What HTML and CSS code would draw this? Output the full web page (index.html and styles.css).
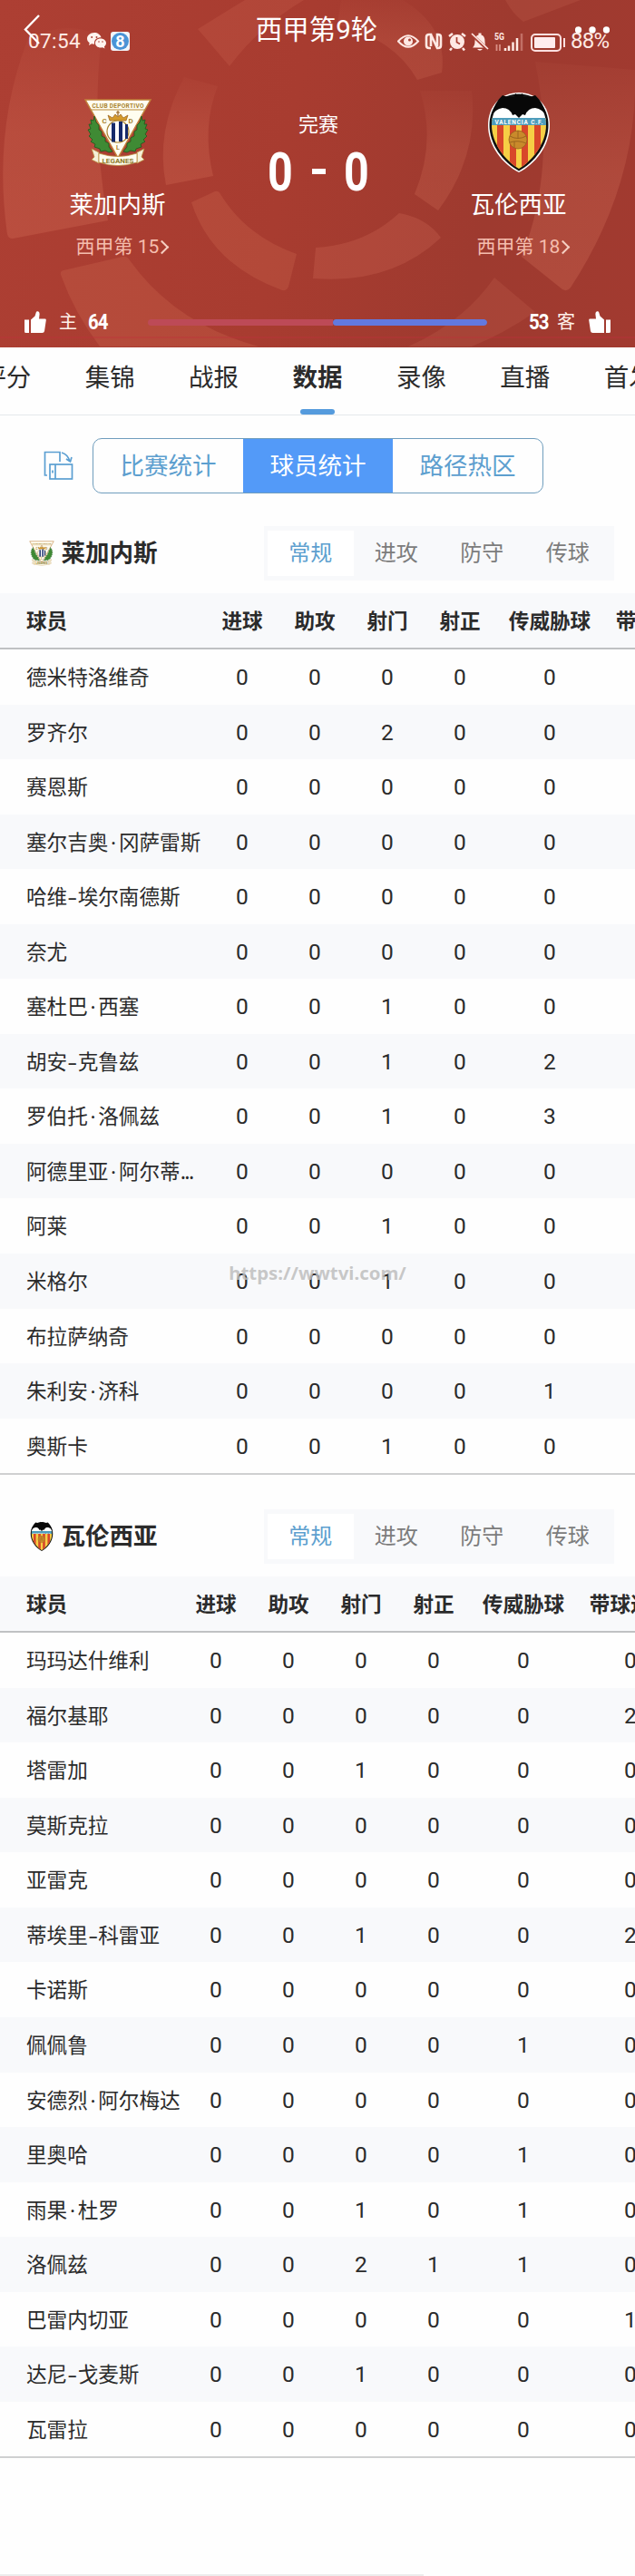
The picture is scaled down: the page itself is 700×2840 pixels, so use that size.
FILE: index.html
```html
<!DOCTYPE html>
<html lang="zh-CN">
<head>
    <meta charset="UTF-8">
    <meta name="viewport" content="width=device-width, initial-scale=1.0">
    <title>西甲第9轮 莱加内斯 - 瓦伦西亚</title>
    <link rel="stylesheet" href="styles.css">
</head>
<body>
    <!-- shared icons -->
    <svg class="sprite" width="0" height="0">
        <symbol id="leganes" viewBox="0 0 76 76">
            <path d="M2 2h72L38 66z" fill="#fffdf0" stroke="#c0803a" stroke-width="1.5"/>
            <path d="M8 13h60" stroke="#b98b3c" stroke-width="1"/>
            <text x="38" y="10.5" font-size="6.6" font-weight="bold" text-anchor="middle" textLength="57" fill="#a8842f">CLUB DEPORTIVO</text>
            <text x="23" y="28" font-size="8" font-weight="bold" text-anchor="middle" fill="#a8842f">C</text>
            <text x="52" y="28" font-size="8" font-weight="bold" text-anchor="middle" fill="#a8842f">D</text>
            <path d="M29 25l-2-6 5 3 3-4 3 3 3-3 3 4 5-3-2 6z" fill="#d49a2c" stroke="#96601d" stroke-width=".7"/>
            <path d="M38 14v6M36 16h4" stroke="#96601d" stroke-width="1.2"/>
            <circle cx="38" cy="37" r="12" fill="#fff" stroke="#a8842f" stroke-width="1.2"/>
            <path d="M31 27.500h4v21h-4zM39 26h4v22h-4zM46 29h3v16h-3z" fill="#152a6b"/>
            <text x="38" y="57" font-size="7" font-weight="bold" text-anchor="middle" fill="#a8842f">L</text>
            <g fill="#3f8a34" stroke="#1d5a1c" stroke-width=".8">
                <path id="wreath" d="M12 20l-1 5-3-1 1 5-3 0 2 5-3 1 3 5-2 2 4 4-2 2 5 3-1 3 6 2 1 3 5-1 4 2 4-1-4-5 0-4-4-2 0-4-4-2 0-5-3-2 0-5-3-3z"/>
                <use href="#wreath" transform="translate(76 0) scale(-1 1)"/>
            </g>
            <path d="M9 56l8 4v12l-8-4 3-3zM67 56l-8 4v12l8-4-3-3z" fill="#f5efd8" stroke="#b98b3c" stroke-width=".8"/>
            <path d="M17 61q21 7 42 0v10q-21 7-42 0z" fill="#fffdf0" stroke="#b98b3c" stroke-width=".8"/>
            <text x="38" y="71.500" font-size="8" font-weight="bold" text-anchor="middle" textLength="35" fill="#8d7a2b">LEGANES</text>
        </symbol>
        <symbol id="valencia" viewBox="0 0 70 90">
            <clipPath id="shield"><path d="M35 4C52 4 65 18 65 37 65 57 50 76 35 85 20 76 5 57 5 37 5 18 18 4 35 4z"/></clipPath>
            <path d="M35 1C55 1 69 16 69 37 69 60 53 80 35 89 17 80 1 60 1 37 1 16 15 1 35 1z" fill="#fff"/>
            <path d="M35 2.500C54 2.500 67.500 17 67.500 37 67.500 59 52 78 35 87.500 18 78 2.500 59 2.500 37 2.500 17 16 2.500 35 2.500z" fill="#111"/>
            <g clip-path="url(#shield)">
                <path d="M0 28h70v62H0z" fill="#f6cf45"/>
                <path d="M11 35h7v55h-7zM25 35h7v55h-7zM38 35h7v55h-7zM52 35h7v55h-7z" fill="#d8472a"/>
                <path d="M0 18h70v13H0z" fill="#fff"/>
                <path d="M0 29h70v8H0z" fill="#4f9dbb"/>
            </g>
            <path d="M31 2l3 2h2l3-2 1 4q8 0 13-2 9 8 13 24-5-9-13-10-8 0-11 8l-3-1-4 4-4-4-3 1q-3-8-11-8-8 1-13 10Q8 12 17 4q5 2 13 2z" fill="#080808"/>
            <text x="35" y="36" font-size="6.500" font-weight="bold" text-anchor="middle" textLength="53" fill="#fff">VALENCIA C.F.</text>
            <circle cx="34" cy="53" r="10" fill="#c98a2b" stroke="#96601d" stroke-width=".8"/>
            <path d="M25 49q9 5 18 0M25 56q9-3 18 1M34 43v8M30 55v7" fill="none" stroke="#96601d" stroke-width=".9"/>
        </symbol>
        <symbol id="thumb" viewBox="0 0 24 24">
            <path d="M0 9.500h5V24H1.500Q0 24 0 22.500zM7 9.500l4.500-4L13 .8Q13.500-.2 15 .3q2 .7 1.500 4L16 8.500h6.500q1.500 0 1.300 1.500L22 22q-.3 2-2.500 2H7z" fill="#fff"/>
        </symbol>
    </svg>

    <header class="hero">
        <svg class="hero-bg" viewBox="0 0 700 383" preserveAspectRatio="none">
            <defs>
                <linearGradient id="fade" x1="0" y1="0" x2="0" y2="1">
                    <stop offset="0" stop-color="#ff9f7d" stop-opacity=".2"/>
                    <stop offset=".5" stop-color="#ff9f7d" stop-opacity=".9"/>
                    <stop offset="1" stop-color="#ff9f7d"/>
                </linearGradient>
            </defs>
            <g fill="#ff9f7d">
                <path fill="url(#fade)" opacity=".16" d="M30 45Q-8 145 8 258q1 5 6 5l105-20Q100 140 112 40 70 20 30 45z"/>
                <path opacity=".13" d="M70 298l65-15q5-1 8 4 50 70 142 95H110Q82 345 67 303q-1-4 3-5z"/>
                <path opacity=".11" d="M218 32L270 0h65q-50 30-82 73z"/>
                <path fill="url(#fade)" opacity=".15" d="M203 85q-32 60-20 119l52-10Q222 140 240 95z"/>
                <path opacity=".13" d="M211 223l26-12q4-1 6 3 28 46 84 66l-9 36q-2 5-7 4-78-28-100-97z"/>
                <path opacity=".14" d="M348 273q54-3 92-38 30 5 46 27-55 52-141 45z"/>
                <path fill="url(#fade)" opacity=".12" d="M376 0h68q50 30 43 80l-27 8q-25-45-88-61z"/>
                <path fill="url(#fade)" opacity=".14" d="M463 100q18 57-6 114l26 18q45-60 37-132z"/>
                <path opacity=".1" d="M557 0q8 15 20 24L640 0z"/>
                <path fill="url(#fade)" opacity=".17" d="M590 68q24 117-15 215l45 36q5 3 9-2 75-115 71-240z"/>
                <path opacity=".1" d="M545 306l45 38q-35 24-70 38h-70q60-26 95-76z"/>
            </g>
            <path d="M0 372h700" stroke="#c0303c" stroke-opacity=".35" stroke-width="2"/>
        </svg>

        <div class="statusbar">
            <span class="clock">07:54</span>
            <svg class="wechat" width="21" height="18" viewBox="0 0 21 18">
                <path d="M8 0C3.500 0 0 3 0 6.500c0 2 1 3.600 2.700 4.800L2 14l3-1.700q1.500.4 3 .4V11c0-3.500 3-5.800 7.500-5.800C14.500 2 11.500 0 8 0zM15 6.500c-3.500 0-6 2.200-6 5s2.500 5 6 5q1 0 2-.3l2.500 1.300-.6-2.200C20.300 14.300 21 13 21 11.500c0-2.800-2.700-5-6-5z" fill="#fff3ee"/>
                <g fill="#a83f33"><circle cx="5.200" cy="5" r="1"/><circle cx="10.500" cy="5" r="1"/><circle cx="13" cy="10" r=".8"/><circle cx="17" cy="10" r=".8"/></g>
            </svg>
            <span class="badge8"><b>8</b></span>
            <svg class="status-icons" width="190" height="24" viewBox="0 0 190 24">
                <g fill="none" stroke="#ffe9e4" stroke-width="2">
                    <path d="M1 12.500Q12 0 23 12.500 12 25 1 12.500z"/>
                    <path d="M37 20h-2q-3 0-3-3V8q0-3 3-3h2v13M37 5l7 15h1q3 0 3-3V8q0-3-3-3h-1v13" stroke-width="2.600"/>
                </g>
                <circle cx="12" cy="12.500" r="5" fill="#ffe9e4"/>
                <circle cx="13.500" cy="11" r="1.500" fill="#a83f33"/>
                <circle cx="66" cy="13" r="8" fill="#ffe9e4"/>
                <path d="M57 7l4-3M75 7l-4-3M60 20l-2 2.500M72 20l2 2.500" stroke="#ffe9e4" stroke-width="2.500"/>
                <path d="M65.500 8v5.500l3.500 2" fill="none" stroke="#a83f33" stroke-width="1.700"/>
                <path d="M83 19.500q2.500-2 2.500-7 0-6 4-7v-2h3v2q4 1 4 7 0 5 2.500 7zM88 21h6q-3 3.500-6 0z" fill="#ffe9e4"/>
                <path d="M82 5l18 17" stroke="#a83f33" stroke-width="3.500"/>
                <path d="M82 4l18 17" stroke="#ffe9e4" stroke-width="1.700"/>
                <text x="107" y="11" font-size="10" font-weight="bold" textLength="11" lengthAdjust="spacingAndGlyphs" fill="#ffe9e4">5G</text>
                <path d="M109.500 23v-7M113 16v7" stroke="#d98f85" stroke-width="1.800"/>
                <path d="M119 20v3M123 17.500V23M127.500 13.500V23M132 9v14" stroke="#ffe9e4" stroke-width="2.500"/>
                <path d="M137 4v19" stroke="#c26f65" stroke-width="2.500"/>
                <rect x="148" y="5" width="32" height="18" rx="4" fill="none" stroke="#ffe0e0" stroke-width="2"/>
                <rect x="151" y="8" width="23" height="12" rx="1" fill="#ffecee"/>
                <path d="M184 9v10" stroke="#ffe0e0" stroke-width="2"/>
            </svg>
            <span class="battery">88%</span>
        </div>

        <nav class="topnav">
            <svg width="20" height="36" viewBox="0 0 20 36"><path d="M17 2L2 17.500 17 33" fill="none" stroke="#fff" stroke-width="2.400"/></svg>
            <h1>西甲第9轮</h1>
            <svg class="more" width="38" height="8" viewBox="0 0 38 8"><g fill="#fff"><circle cx="3.500" cy="4" r="3.700"/><circle cx="19" cy="4" r="3.700"/><circle cx="34.500" cy="4" r="3.700"/></g></svg>
        </nav>

        <section class="match">
            <div class="side">
                <svg class="crest-lg" width="76" height="76"><use href="#leganes"/></svg>
                <div class="side-name">莱加内斯</div>
                <div class="side-rank">西甲第 15<i class="chevron"></i></div>
            </div>
            <div class="result">
                <div class="state">完赛</div>
                <div class="score"><span>0</span><i></i><span>0</span></div>
            </div>
            <div class="side">
                <svg class="crest-lg" width="70" height="90"><use href="#valencia"/></svg>
                <div class="side-name">瓦伦西亚</div>
                <div class="side-rank">西甲第 18<i class="chevron"></i></div>
            </div>
        </section>

        <section class="votes">
            <svg width="24" height="24"><use href="#thumb"/></svg>
            <span class="vote-label">主</span><b>64</b>
            <div class="vote-bar"><i class="home"></i><i class="away"></i></div>
            <b>53</b><span class="vote-label right">客</span>
            <svg class="flip" width="24" height="24"><use href="#thumb"/></svg>
        </section>
    </header>

    <div class="tabs">
        <a>评分</a>
        <a>集锦</a>
        <a>战报</a>
        <a class="active">数据</a>
        <a>录像</a>
        <a>直播</a>
        <a>首发</a>
    </div>

    <div class="switcher">
        <svg width="33" height="33" viewBox="0 0 33 33" fill="none" stroke="#5b9fd2" stroke-width="1.700">
            <path d="M4 27H1.500V1.500H18V12M20 2q7 2 9 10M25 9l4.500 3L31 7"/>
            <rect x="7" y="15" width="24.500" height="16"/>
            <path d="M13 15v16M10 21.500v3"/>
        </svg>
        <div class="segments">
            <span>比赛统计</span>
            <span class="on">球员统计</span>
            <span>路径热区</span>
        </div>
    </div>

    <section class="team team-home">
        <div class="team-head">
            <svg width="28" height="28" class="crest-sm"><use href="#leganes"/></svg>
            <h2>莱加内斯</h2>
            <div class="filters"><span class="on">常规</span><span>进攻</span><span>防守</span><span>传球</span></div>
        </div>
        <div class="table" id="homeTable"></div>
    </section>

    <section class="team team-away">
        <div class="team-head">
            <svg width="28" height="34" class="crest-sm"><use href="#valencia"/></svg>
            <h2>瓦伦西亚</h2>
            <div class="filters"><span class="on">常规</span><span>进攻</span><span>防守</span><span>传球</span></div>
        </div>
        <div class="table" id="awayTable"></div>
    </section>

    <div class="watermark">https://wwtvi.com/</div>
    <div class="bottom-line"></div>

    <script>
        const columns = ['球员', '进球', '助攻', '射门', '射正', '传威胁球', '带球过人'];

        const homePlayers = [
            ['德米特洛维奇', 0, 0, 0, 0, 0, 0],
            ['罗齐尔', 0, 0, 2, 0, 0, 0],
            ['赛恩斯', 0, 0, 0, 0, 0, 0],
            ['塞尔吉奥·冈萨雷斯', 0, 0, 0, 0, 0, 0],
            ['哈维-埃尔南德斯', 0, 0, 0, 0, 0, 0],
            ['奈尤', 0, 0, 0, 0, 0, 0],
            ['塞杜巴·西塞', 0, 0, 1, 0, 0, 0],
            ['胡安-克鲁兹', 0, 0, 1, 0, 2, 0],
            ['罗伯托·洛佩兹', 0, 0, 1, 0, 3, 0],
            ['阿德里亚·阿尔蒂...', 0, 0, 0, 0, 0, 0],
            ['阿莱', 0, 0, 1, 0, 0, 0],
            ['米格尔', 0, 0, 1, 0, 0, 0],
            ['布拉萨纳奇', 0, 0, 0, 0, 0, 0],
            ['朱利安·济科', 0, 0, 0, 0, 1, 0],
            ['奥斯卡', 0, 0, 1, 0, 0, 0],
        ];

        const awayPlayers = [
            ['玛玛达什维利', 0, 0, 0, 0, 0, 0],
            ['福尔基耶', 0, 0, 0, 0, 0, 2],
            ['塔雷加', 0, 0, 1, 0, 0, 0],
            ['莫斯克拉', 0, 0, 0, 0, 0, 0],
            ['亚雷克', 0, 0, 0, 0, 0, 0],
            ['蒂埃里-科雷亚', 0, 0, 1, 0, 0, 2],
            ['卡诺斯', 0, 0, 0, 0, 0, 0],
            ['佩佩鲁', 0, 0, 0, 0, 1, 0],
            ['安德烈·阿尔梅达', 0, 0, 0, 0, 0, 0],
            ['里奥哈', 0, 0, 0, 0, 1, 0],
            ['雨果·杜罗', 0, 0, 1, 0, 1, 0],
            ['洛佩兹', 0, 0, 2, 1, 1, 0],
            ['巴雷内切亚', 0, 0, 0, 0, 0, 1],
            ['达尼-戈麦斯', 0, 0, 1, 0, 0, 0],
            ['瓦雷拉', 0, 0, 0, 0, 0, 0],
        ];

        // separators inside names get a fixed narrow width
        function formatCell(value) {
            return String(value)
                .replace('·', '<i class="sep">·</i>')
                .replace('-', '<i class="sep dash">-</i>')
                .replace('...', '<i class="dots">...</i>');
        }

        function renderTable(id, players) {
            const row = (cells, cls) => `<div class="row ${cls}">${cells.map(c => `<span>${formatCell(c)}</span>`).join('')}</div>`;
            document.getElementById(id).innerHTML = row(columns, 'head') + players.map(p => row(p, 'player')).join('');
        }

        renderTable('homeTable', homePlayers);
        renderTable('awayTable', awayPlayers);
    </script>
</body>
</html>
```
FILE: styles.css
```css
* {
    box-sizing: border-box;
}

body {
    margin: 0;
    width: 700px;
    height: 2840px;
    position: relative;
    overflow: hidden;
    background-color: #fefefe;
    color: #2b2b2b;
    font-family: Roboto, 'Noto Sans CJK SC', sans-serif;
}

.sprite {
    position: absolute;
}

svg {
    display: block;
    flex: none;
}

i {
    font-style: normal;
}

/* header */
.hero {
    position: relative;
    height: 383px;
    color: #fff;
    background: linear-gradient(100deg, #ad3f33, #a83c30 45%, #9e3a2f 75%, #a23a30);
}

.hero-bg {
    position: absolute;
    inset: 0;
    width: 700px;
    height: 383px;
}

.statusbar {
    position: absolute;
    top: 30px;
    left: 31px;
    right: 25px;
    height: 30px;
    display: flex;
    align-items: center;
    color: #ffeae4;
}

.clock {
    width: 65px;
    font-size: 22.5px;
    letter-spacing: 0.4px;
}

.badge8 {
    width: 21px;
    height: 21px;
    margin-left: 5px;
    padding: 1px;
    border-radius: 3px;
    background-color: #f4f6fa;
}

.badge8 b {
    display: block;
    height: 19px;
    border-radius: 50%;
    background-color: #4a94d6;
    font-size: 18px;
    line-height: 19px;
    text-align: center;
    color: #fff;
}

.status-icons {
    margin-left: auto;
}

.battery {
    width: 46px;
    margin-left: 1px;
    font-size: 24px;
    letter-spacing: -0.7px;
}

.topnav {
    position: relative;
    display: flex;
    align-items: center;
    justify-content: space-between;
    height: 66px;
    padding: 0 28px 0 26px;
}

.topnav h1 {
    margin: 0 0 0 18px;
    font-size: 29.5px;
    font-weight: 400;
    line-height: 66px;
}

.match {
    position: relative;
    display: grid;
    grid-template-columns: 259px 1fr 257px;
    height: 277px;
}

.side {
    display: flex;
    flex-direction: column;
    align-items: center;
}

.crest-lg {
    height: 90px;
    margin-top: 35px;
}

.side-name {
    margin-top: 18px;
    font-size: 26.5px;
    line-height: 34px;
}

.side-rank {
    display: flex;
    align-items: center;
    margin: 14px 0 0 12px;
    font-size: 21px;
    line-height: 30px;
    color: #f5bdae;
}

.chevron {
    width: 11px;
    height: 11px;
    margin: 0 3px 0 -2px;
    border-top: 2px solid #f5cfc2;
    border-right: 2px solid #f5cfc2;
    transform: rotate(45deg);
}

.result {
    text-align: center;
}

.state {
    margin-top: 57px;
    font-size: 22px;
    line-height: 30px;
}

.score {
    display: flex;
    justify-content: center;
    align-items: center;
    gap: 17.5px;
    height: 72px;
    font-size: 59px;
    font-weight: 700;
}

.score span {
    transform: scaleX(0.82);
}

.score i {
    width: 15px;
    height: 6px;
    background-color: #fff;
}

.votes {
    position: relative;
    display: flex;
    align-items: center;
    height: 24px;
    padding: 0 27px;
}

.vote-label {
    flex: none;
    width: 46px;
    padding-left: 14px;
    font-size: 20px;
    line-height: 26px;
    color: #fff1ea;
}

.vote-label.right {
    width: 40px;
    padding-left: 9px;
}

.votes b {
    flex: none;
    width: 22px;
    font-size: 24px;
    letter-spacing: -1px;
    transform: scaleX(0.85);
    transform-origin: left;
}

.vote-bar {
    display: flex;
    flex: none;
    width: 374px;
    height: 7px;
    margin: 0 46px 0 44px;
    border-radius: 4px;
    overflow: hidden;
}

.vote-bar .home {
    width: 204px;
    background-color: #bd4a57;
}

.vote-bar .away {
    flex: 1;
    border-radius: 4px;
    background-color: #6279df;
}

.flip {
    margin-left: auto;
    transform: scaleX(-1);
}

/* tabs */
.tabs {
    display: flex;
    justify-content: center;
    height: 75px;
    overflow: hidden;
    border-bottom: 1px solid #e4e8eb;
}

.tabs a {
    position: relative;
    flex: none;
    width: 114.4px;
    font-size: 27.5px;
    line-height: 67px;
    text-align: center;
}

.tabs .active {
    font-weight: 700;
}

.tabs .active::after {
    content: '';
    position: absolute;
    left: 38px;
    bottom: 0;
    width: 38px;
    height: 6px;
    border-radius: 3px;
    background-color: #559bdd;
}

/* stat switcher */
.switcher {
    display: flex;
    align-items: center;
    gap: 21px;
    padding: 25px 0 0 48px;
}

.segments {
    display: flex;
    width: 497px;
    height: 61px;
    border: 1px solid #6f9dbd;
    border-radius: 10px;
    overflow: hidden;
}

.segments span {
    flex: 1;
    font-size: 26.5px;
    line-height: 60px;
    text-align: center;
    color: #5d9fcf;
}

.segments .on {
    background-color: #539af8;
    color: #fff;
}

/* team stats */
.team-head {
    display: flex;
    align-items: center;
    height: 61px;
    margin-top: 35px;
    padding: 0 23px 0 32px;
}

.team-away .team-head {
    margin-top: 37px;
}

.team-head h2 {
    margin: 0 0 0 7.5px;
    font-size: 26.5px;
    line-height: 62px;
}

.filters {
    display: flex;
    width: 386px;
    height: 60px;
    margin-left: auto;
    padding: 5px 4px;
    background-color: #f8f9fb;
}

.filters span {
    flex: 1;
    font-size: 24px;
    line-height: 51px;
    text-align: center;
    color: #7c7c7c;
}

.filters .on {
    background-color: #fff;
    color: #5d9fcf;
}

.table {
    margin-top: 14px;
    overflow: hidden;
    border-bottom: 2px solid #cfd0d1;
}

.row {
    display: grid;
    grid-template-columns: 227px 80px 80px 80px 80px 118px 118px;
    height: 60.56px;
    line-height: 62px;
    font-size: 24.5px;
    text-align: center;
}

.team-away .row {
    grid-template-columns: 198px 80px 80px 80px 80px 118px 118px;
}

.row span:first-child {
    padding-left: 29px;
    font-family: 'Noto Sans CJK SC', sans-serif;
    font-size: 22.6px;
    line-height: 60px;
    text-align: left;
    white-space: nowrap;
}

.sep {
    display: inline-block;
    width: 11.5px;
    font-family: 'Noto Sans', sans-serif;
    text-align: center;
}

.dash {
    transform: scaleX(1.5);
}

.dots {
    letter-spacing: -1.6px;
}

.row.head {
    height: 62px;
    line-height: 63px;
    border-bottom: 2px solid #bfc1c3;
    background-color: #f8f9fb;
    font-size: 22.6px;
    font-weight: 700;
}

.player:nth-child(odd) {
    background-color: #f8f9fb;
}

.watermark {
    position: absolute;
    top: 1389px;
    left: 250px;
    width: 200px;
    font-family: 'Noto Sans', sans-serif;
    font-size: 20.4px;
    font-weight: 700;
    line-height: 28px;
    text-align: center;
    white-space: nowrap;
    color: rgba(190, 190, 190, 0.85);
}

.bottom-line {
    width: 467px;
    height: 2px;
    margin-top: 128px;
    background-color: #ececec;
}
```
